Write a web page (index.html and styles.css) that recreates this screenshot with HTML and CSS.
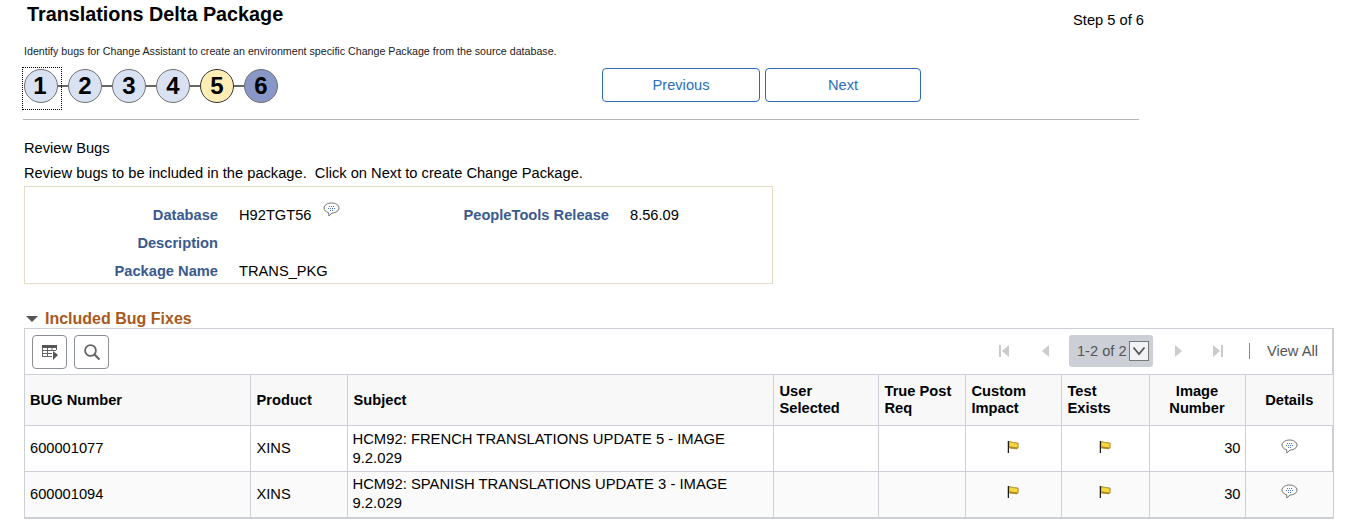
FILE: index.html
```html
<!DOCTYPE html>
<html lang="en">
<head>
<meta charset="utf-8">
<title>Translations Delta Package</title>
<link rel="stylesheet" href="styles.css">
</head>
<body>
<svg class="defs" width="0" height="0" aria-hidden="true">
  <symbol id="bubble" viewBox="0 0 17 16">
    <path d="M8.500 1C4.400 1 1 3.200 1 6c0 2.300 2 4.100 4.600 4.700l.3 3.300 3.100-3C13 10.900 16 8.800 16 6c0-2.800-3.400-5-7.500-5z" fill="#fff" stroke="#6f7377" stroke-width="1"/>
    <path d="M6 4.500h1M8 4.500h1M10 4.500h1M5 6.500h1M7 6.500h1M9 6.500h1M11 6.500h1M7 8.500h1M9 8.500h1" stroke="#4f78c4" stroke-width="1"/>
  </symbol>
  <symbol id="flag" viewBox="0 0 13 13">
    <path d="M2.500 4l8.500 1.500v3.500L2.500 8z" fill="#b08a22"/>
    <path d="M2 1c2-.4 3 .3 5 .7l5 .6v5.400l-5-.7c-2-.4-3-.8-5-.4z" fill="#f6d83e" stroke="#a5801d" stroke-width="1"/>
    <path d="M1.500 0v13" stroke="#1c1c1c" stroke-width="1.400"/>
  </symbol>
</svg>
<main class="page">
  <header class="title-row">
    <h1 class="title">Translations Delta Package</h1>
    <div class="step-of">Step 5 of 6</div>
  </header>
  <p class="intro">Identify bugs for Change Assistant to create an environment specific Change Package from the source database.</p>
  <div class="nav-row">
    <div class="stepper">
      <span class="step focus">1</span><span class="link"></span>
      <span class="step">2</span><span class="link"></span>
      <span class="step">3</span><span class="link"></span>
      <span class="step">4</span><span class="link"></span>
      <span class="step current">5</span><span class="link"></span>
      <span class="step todo">6</span>
    </div>
    <div class="buttons">
      <button class="btn btn-prev" type="button">Previous</button>
      <button class="btn btn-next" type="button">Next</button>
    </div>
  </div>
  <hr class="rule">
  <p class="review-title">Review Bugs</p>
  <p class="review-text">Review bugs to be included in the package.&nbsp; Click on Next to create Change Package.</p>
  <section class="info">
    <div class="info-label">Database</div>
    <div class="info-value">H92TGT56<svg class="bubble-top"><use href="#bubble"/></svg></div>
    <div class="info-label">PeopleTools Release</div>
    <div class="info-value">8.56.09</div>
    <div class="info-label">Description</div>
    <div class="info-value"></div>
    <div class="info-label"></div>
    <div class="info-value"></div>
    <div class="info-label">Package Name</div>
    <div class="info-value">TRANS_PKG</div>
  </section>
  <h2 class="group"><span class="caret"></span>Included Bug Fixes</h2>
  <section class="grid">
    <div class="toolbar">
      <button class="tool" type="button" aria-label="Personalize">
        <svg width="18" height="16" viewBox="0 0 18 16"><path d="M1 1h15v3H1z" fill="#555"/><path d="M1 6.500h14M1 9.500h10M1 12.500h10M1.500 4v9M6.500 4v9M11 4v3M15.500 4v2" stroke="#666" stroke-width="1" fill="none"/><path d="M12 7l5 4-5 5z" fill="#555"/></svg>
      </button>
      <button class="tool" type="button" aria-label="Find">
        <svg width="18" height="18" viewBox="0 0 18 18"><circle cx="7.500" cy="7.500" r="5.400" fill="none" stroke="#666" stroke-width="1.800"/><path d="M11.500 11.500l5 5" stroke="#666" stroke-width="2.200"/></svg>
      </button>
      <div class="pager">
        <svg class="pg pg-first" width="12" height="14" viewBox="0 0 12 14"><path d="M1 1h2v12H1zM11 1v12L4 7z" fill="#c9cbce"/></svg>
        <svg class="pg pg-prev" width="9" height="14" viewBox="0 0 9 14"><path d="M8 1v12L1 7z" fill="#c9cbce"/></svg>
        <div class="range">1-2 of 2<span class="drop"><svg width="14" height="10" viewBox="0 0 14 10"><path d="M1.500 1.500L7 8l5.500-6.500" fill="none" stroke="#555" stroke-width="1.800"/></svg></span></div>
        <svg class="pg pg-next" width="9" height="14" viewBox="0 0 9 14"><path d="M1 1v12l7-6z" fill="#c9cbce"/></svg>
        <svg class="pg pg-last" width="12" height="14" viewBox="0 0 12 14"><path d="M1 1v12l7-6zM9 1h2v12H9z" fill="#c9cbce"/></svg>
        <span class="sep"></span>
        <span class="view-all">View All</span>
      </div>
    </div>
    <table class="data">
      <colgroup>
        <col class="c1"><col class="c2"><col class="c3"><col class="c4"><col class="c5"><col class="c6"><col class="c7"><col class="c8"><col class="c9">
      </colgroup>
      <thead>
        <tr>
          <th class="tight">BUG Number</th><th>Product</th><th>Subject</th><th>User<br>Selected</th><th>True Post<br>Req</th><th>Custom<br>Impact</th><th>Test<br>Exists</th><th class="ctr">Image<br>Number</th><th class="ctr">Details</th>
        </tr>
      </thead>
      <tbody>
        <tr>
          <td>600001077</td><td class="prod">XINS</td><td class="subj">HCM92: FRENCH TRANSLATIONS UPDATE 5 - IMAGE<br>9.2.029</td><td></td><td></td>
          <td class="ctr"><svg class="flag"><use href="#flag"/></svg></td><td class="ctr"><svg class="flag"><use href="#flag"/></svg></td><td class="num">30</td><td class="ctr"><svg class="bubble"><use href="#bubble"/></svg></td>
        </tr>
        <tr class="alt">
          <td>600001094</td><td class="prod">XINS</td><td class="subj">HCM92: SPANISH TRANSLATIONS UPDATE 3 - IMAGE<br>9.2.029</td><td></td><td></td>
          <td class="ctr"><svg class="flag"><use href="#flag"/></svg></td><td class="ctr"><svg class="flag"><use href="#flag"/></svg></td><td class="num">30</td><td class="ctr"><svg class="bubble"><use href="#bubble"/></svg></td>
        </tr>
      </tbody>
    </table>
  </section>
</main>
</body>
</html>
```
FILE: styles.css
```css
* { box-sizing: border-box; }
html, body { margin: 0; padding: 0; }
body {
  font-family: "Liberation Sans", Arial, sans-serif;
  font-size: 14.67px;
  color: #000;
  background: #fff;
  overflow: hidden;
}
.defs { position: absolute; }
.page { padding-left: 24px; width: 1354px; }

.title-row { display: flex; height: 36px; width: 1120px; justify-content: space-between; }
.title { margin: 3px 0 0 3px; font-size: 19.8px; line-height: 23px; font-weight: 700; }
.step-of { margin-top: 12px; line-height: 16px; }

.intro { margin: 9px 0 0; font-size: 10.67px; line-height: 12px; color: #222; }

.nav-row { display: flex; margin-top: 11px; height: 41px; }
.stepper { display: flex; align-items: center; width: 578px; height: 35px; padding-top: 1px; }
.step {
  width: 34px; height: 34px; border-radius: 50%;
  border: 1px solid #707070; background: #d9e2f2;
  display: flex; align-items: center; justify-content: center;
  font-size: 24px; font-weight: 700; flex: none;
}
.step.focus { position: relative; padding-right: 2px; }
.step.focus::after {
  content: ""; position: absolute; left: -3px; top: -3px; width: 38px; height: 41px;
  border: 1px dotted #000;
}
.step.current { background: #feedb5; border-color: #333; }
.step.todo { background: #8897c6; }
.link { width: 10px; height: 2px; background: #666; flex: none; }
.buttons { display: flex; gap: 5px; }
.btn {
  height: 34px; background: #fff; border: 1px solid #2a6ebb; border-radius: 4px;
  color: #2a6ebb; font: 14.67px "Liberation Sans", Arial, sans-serif; padding: 0;
}
.btn-prev { width: 158px; }
.btn-next { width: 156px; }

.rule { margin: 10px 0 0 -1px; width: 1116px; border: 0; border-top: 1px solid #b5b5b5; height: 1px; }

.review-title { margin: 20px 0 0; line-height: 16px; }
.review-text { margin: 9px 0 0; line-height: 16px; }

.info {
  margin-top: 5px; width: 749px; height: 98px;
  border: 1px solid #e3dcc4;
  display: grid;
  grid-template-columns: 193px 197px 194px auto;
  grid-auto-rows: 28px;
  padding-top: 20px;
}
.info-label { text-align: right; font-weight: 700; color: #3a5a8f; line-height: 16px; }
.info-value { padding-left: 21px; line-height: 16px; white-space: nowrap; position: relative; }
.bubble-top { width: 17px; height: 16px; position: absolute; left: 105px; top: -5px; }

.group { margin: 26px 0 0; font-size: 16px; line-height: 17px; font-weight: 700; color: #a85a1c; display: flex; align-items: center; }
.caret { width: 0; height: 0; margin: 0 7px 0 2px; border-left: 6px solid transparent; border-right: 6px solid transparent; border-top: 6px solid #555; }

.grid { width: 1310px; margin-top: 1px; border: 1px solid #ccd0d6; border-bottom-width: 2px; border-right-width: 2px; }
.toolbar { display: flex; align-items: center; height: 45px; padding-left: 7px; gap: 7px; }
.tool {
  width: 35px; height: 34px; background: #fff; border: 1px solid #8b8f94; border-radius: 4px;
  padding: 0; display: flex; align-items: center; justify-content: center;
}
.pager { margin-left: auto; align-self: flex-start; margin-top: 6px; display: flex; align-items: center; height: 32px; color: #6b6b6b; padding-right: 14px; }
.pg { flex: none; }
.pg-prev { margin-left: 31px; margin-right: 19px; }
.pg-next { margin-left: 21px; }
.pg-last { margin-left: 29px; }
.range {
  height: 32px; width: 84px; background: #ccd0d6; border-radius: 3px; display: flex; align-items: center;
  padding-left: 8px; color: #555; white-space: nowrap;
}
.drop { width: 20px; height: 20px; margin-left: 2px; border: 1px solid #777; background: #f2f3f5; display: flex; align-items: center; justify-content: center; flex: none; }
.sep { width: 1px; height: 16px; background: #888; margin-left: 25px; margin-right: 17px; }
.view-all { color: #555; }

.data { border-collapse: collapse; table-layout: fixed; width: 1308px; }
.c1 { width: 225px; } .c2 { width: 97px; } .c3 { width: 426px; } .c4 { width: 105px; }
.c5 { width: 87px; } .c6 { width: 96px; } .c7 { width: 88px; } .c8 { width: 96px; } .c9 { width: 88px; }
.data th, .data td { border: 1px solid #ccd0d6; padding: 0 5px; }
.data tr > :first-child { border-left: 0; }
.data tr > :last-child { border-right: 0; }
.data tbody tr:last-child td { border-bottom: 0; height: 45px; }
.data th {
  height: 51px; background: #f8f8f8; text-align: left; font-weight: 700; line-height: 17px; vertical-align: middle; padding-left: 6px;
}
.data th.tight { padding-left: 5px; }
.data th.ctr { text-align: center; padding-left: 0; padding-right: 0; }
.data td { height: 46px; line-height: 19px; vertical-align: middle; }
.data td.prod { padding-left: 6px; }
.data td.subj { font-size: 14.8px; }
.data td.ctr { text-align: center; padding-bottom: 5px; }
.data td.num { text-align: right; padding-right: 4px; }
.alt td { background: #fafafa; }
.flag { width: 12px; height: 12px; vertical-align: middle; }
.bubble { width: 17px; height: 16px; vertical-align: middle; }
```
